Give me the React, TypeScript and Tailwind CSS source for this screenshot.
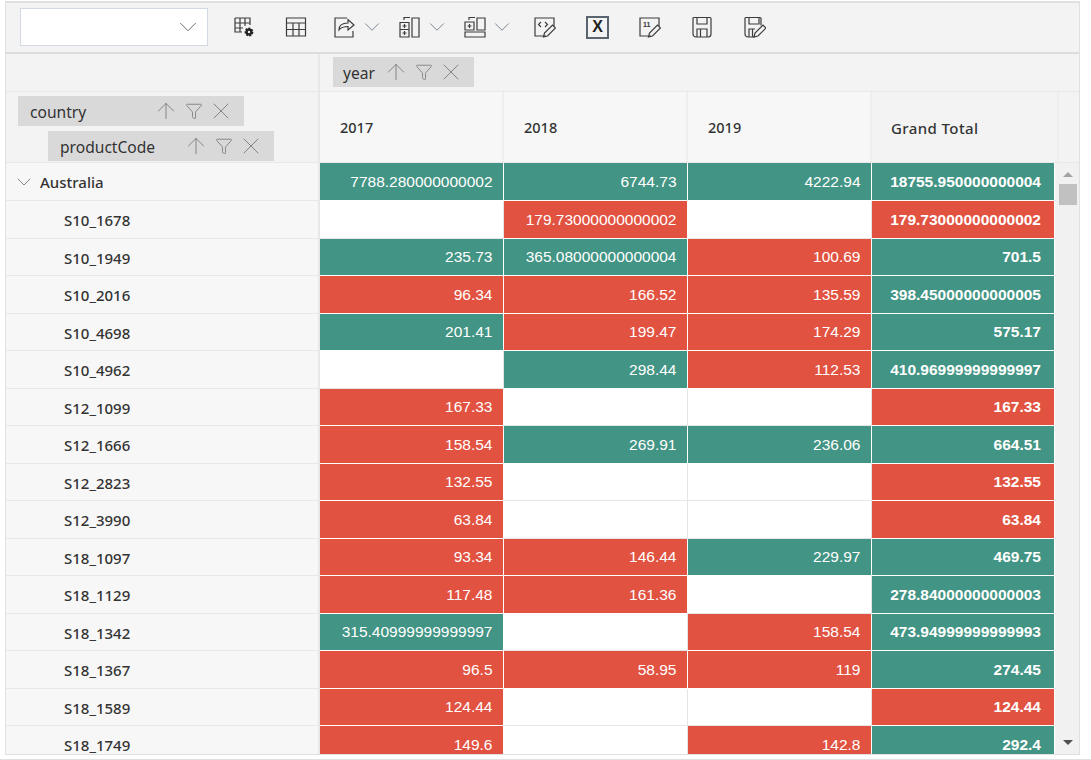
import React from "react";
import { ArrowUp, ChevronDown, Filter, X } from "lucide-react";

type Cell = { v: string; c: "t" | "r" | "" };

const t = (v: string): Cell => ({ v, c: "t" });
const r = (v: string): Cell => ({ v, c: "r" });
const e: Cell = { v: "", c: "" };

const rows: { label: string; cells: Cell[] }[] = [
  { label: "Australia", cells: [t("7788.280000000002"), t("6744.73"), t("4222.94"), t("18755.950000000004")] },
  { label: "S10_1678", cells: [e, r("179.73000000000002"), e, r("179.73000000000002")] },
  { label: "S10_1949", cells: [t("235.73"), t("365.08000000000004"), r("100.69"), t("701.5")] },
  { label: "S10_2016", cells: [r("96.34"), r("166.52"), r("135.59"), t("398.45000000000005")] },
  { label: "S10_4698", cells: [t("201.41"), r("199.47"), r("174.29"), t("575.17")] },
  { label: "S10_4962", cells: [e, t("298.44"), r("112.53"), t("410.96999999999997")] },
  { label: "S12_1099", cells: [r("167.33"), e, e, r("167.33")] },
  { label: "S12_1666", cells: [r("158.54"), t("269.91"), t("236.06"), t("664.51")] },
  { label: "S12_2823", cells: [r("132.55"), e, e, r("132.55")] },
  { label: "S12_3990", cells: [r("63.84"), e, e, r("63.84")] },
  { label: "S18_1097", cells: [r("93.34"), r("146.44"), t("229.97"), t("469.75")] },
  { label: "S18_1129", cells: [r("117.48"), r("161.36"), e, t("278.84000000000003")] },
  { label: "S18_1342", cells: [t("315.40999999999997"), e, r("158.54"), t("473.94999999999993")] },
  { label: "S18_1367", cells: [r("96.5"), r("58.95"), r("119"), t("274.45")] },
  { label: "S18_1589", cells: [r("124.44"), e, e, r("124.44")] },
  { label: "S18_1749", cells: [r("149.6"), e, r("142.8"), t("292.4")] },
];

const cellBg = { t: "bg-[#429484]", r: "bg-[#e25241]", "": "bg-white" };

function Ico({ children, className = "" }: { children: React.ReactNode; className?: string }) {
  return (
    <svg viewBox="0 0 24 24" fill="none" stroke="#3c3c3c" strokeWidth="1.2" className={"h-6 w-6 shrink-0 " + className}>
      {children}
    </svg>
  );
}

function Chev({ className = "" }: { className?: string }) {
  return <ChevronDown className={"h-[26px] w-[26px] shrink-0 text-[#6b7684] " + className} strokeWidth={0.8} />;
}

function Pill({ label, className = "" }: { label: string; className?: string }) {
  return (
    <div className={"flex h-[30px] items-center bg-[#d9d9d9] pr-[10px] text-[15.6px] text-[#333] " + className}>
      <span className="flex-1 pt-[4px]">{label}</span>
      <span className="flex w-[28px] justify-center">
        <ArrowUp className="h-[26px] w-[26px] text-[#777]" strokeWidth={0.8} />
      </span>
      <span className="flex w-[28px] justify-center">
        <Filter className="h-[18px] w-[18px] text-[#777]" strokeWidth={1.1} />
      </span>
      <span className="flex w-[26px] justify-center">
        <X className="h-[28px] w-[28px] shrink-0 text-[#777]" strokeWidth={0.75} />
      </span>
    </div>
  );
}

export default function App() {
  return (
    <div className="h-[760px] w-[1091px] overflow-hidden bg-white pl-[5px] pt-px font-['Noto_Sans',sans-serif]">
      <div className="flex h-[754px] w-[1075px] flex-col overflow-hidden border-x border-b border-t-2 border-[#e0e0e0]">
        {/* Toolbar */}
        <div className="flex h-[51px] shrink-0 items-center border-b-2 border-[#dcdcdc] bg-[#f3f3f3] pb-px pl-[14px]">
          <div className="flex h-[38px] w-[188px] items-center justify-end border border-[#d3d9e4] bg-white pr-[4px]">
            <ChevronDown className="h-[30px] w-[30px] text-[#555]" strokeWidth={0.7} />
          </div>
          <Ico className="ml-[24px]">
            <path d="M3 3h15v7M3 3v14h7M3 8h15M3 13h8M8 3v14M13 3v8" />
            <circle cx="17" cy="17" r="3.4" fill="#222" stroke="#222" strokeWidth="2" strokeDasharray="2 1" />
            <circle cx="17" cy="17" r="1.2" fill="#f3f3f3" stroke="none" />
          </Ico>
          <Ico className="ml-[28px]">
            <path d="M2.5 3h19v18h-19zM2.5 8h19M2.5 14.5h19M9 8v13M15 8v13" />
          </Ico>
          <Ico className="ml-[24px]">
            <path d="M15 3H3v19h18v-6" />
            <path d="M7 15c0-5 3-7 9-7V4.5l6 5.5-6 5v-3.5c-4 0-7 1-9 3.500z" />
          </Ico>
          <Chev className="ml-[3px]" />
          <Ico className="ml-[12px]">
            <path d="M7 5V2.500h6M3 7.500h9V22H3zM3 14.500h9M15 3h7v19h-7z" />
            <path d="M5.500 11h4M7.500 9v4M5.500 18h4M7.500 16v4" />
          </Ico>
          <Chev className="ml-[3px]" />
          <Ico className="ml-[13px]">
            <path d="M6 5V2.500h6M2 7h9v8H2zM14 3h8v12h-8zM2 17h20v5H2z" />
            <path d="M4.500 11h4M6.500 9v4" />
          </Ico>
          <Chev className="ml-[2px] text-[#4b7fb0]" />
          <Ico className="ml-[17px]">
            <path d="M14 21H3V3h19v8" />
            <path d="M9 7l-2.500 2.500L9 12M13 7l2.500 2.500L13 12" />
            <path d="M13 22l1-4 8-8 3 3-8 8z" transform="translate(-1.500 0)" />
          </Ico>
          <div className="ml-[30px] flex h-[23px] w-[23px] shrink-0 items-center justify-center border-2 border-[#5a646e] font-['Liberation_Sans',sans-serif] text-[16px] font-bold leading-none text-[#222]">
            X
          </div>
          <Ico className="ml-[28px]">
            <path d="M14 21H3V3h19v8" />
            <path d="M13 22l1-4 8-8 3 3-8 8z" transform="translate(-1.500 0)" />
            <text x="6" y="12" fontSize="7" fontWeight="700" fill="#333" stroke="none" fontFamily="Liberation Sans">11</text>
          </Ico>
          <Ico className="ml-[29px]">
            <path d="M4 2.500h16a1.500 1.500 0 0 1 1 1V19a3 3 0 0 1-3 3H6a3 3 0 0 1-3-3V3.500a1 1 0 0 1 1-1z" />
            <path d="M7 2.500V9h10V2.500M7 22v-8h10v8M10.500 14v8" />
          </Ico>
          <Ico className="ml-[28px]">
            <path d="M13 22H6a3 3 0 0 1-3-3V3.500a1 1 0 0 1 1-1h14a1 1 0 0 1 1 1v7" />
            <path d="M7 2.500V9h10V2.500M7 22v-8h6M10.500 14v8" />
            <path d="M13 22l1-4 8-8 3 3-8 8z" transform="translate(-1 0)" />
          </Ico>
        </div>

        {/* Column axis */}
        <div className="flex h-[38px] shrink-0 border-b border-[#e8e8e8] bg-[#f3f3f3]">
          <div className="w-[314px] shrink-0 border-r-2 border-[#e8e8e8]" />
          <div className="pl-[13px] pt-[3px]">
            <Pill label="year" className="w-[141px] pl-[10px]" />
          </div>
        </div>

        {/* Column headers */}
        <div className="flex h-[71px] shrink-0 border-b border-[#e8e8e8] bg-[#f7f7f7]">
          <div className="flex w-[314px] shrink-0 flex-col gap-[5px] border-r-2 border-[#e8e8e8] bg-[#f3f3f3] pl-[12px] pt-[4px]">
            <Pill label="country" className="w-[226px] pl-[12px]" />
            <Pill label="productCode" className="ml-[30px] w-[226px] pl-[12px]" />
          </div>
          {["2017", "2018", "2019"].map((y) => (
            <div key={y} className="flex w-[184px] shrink-0 items-center border-r-2 border-[#eeeeee] pl-[20px] pt-[2px] text-[14.5px] font-medium text-[#333]">
              {y}
            </div>
          ))}
          <div className="flex w-[187px] shrink-0 items-center border-r-2 border-[#eeeeee] bg-[#f3f3f3] pl-[19px] pt-[2px] text-[15px] font-medium tracking-[0.4px] text-[#333]">
            Grand Total
          </div>
          <div className="flex-1 bg-[#f3f3f3]" />
        </div>

        {/* Body */}
        <div className="flex min-h-0 flex-1">
          <div className="min-w-0 flex-1 overflow-hidden">
            {rows.map((row, i) => (
              <div key={row.label} className={"flex " + (i === 0 ? "h-[38px]" : "h-[37.5px]")}>
                <div
                  className={
                    "flex w-[314px] shrink-0 items-center border-b border-r-2 border-[#e8e8e8] bg-[#f7f7f7] text-[15px] font-medium text-[#333] " +
                    (i === 0 ? "pl-[6px]" : "pl-[58px]")
                  }
                >
                  {i === 0 && <ChevronDown className="mr-[4px] h-6 w-6 text-[#666]" strokeWidth={0.8} />}
                  <span className="pt-[2px]">{row.label}</span>
                </div>
                {row.cells.map((cell, j) => (
                  <div
                    key={j}
                    className={
                      "flex shrink-0 items-center justify-end border-b border-r font-['Liberation_Sans',sans-serif] text-[15.5px] text-white " +
                      (cell.c ? "border-white " : "border-[#e6e6e6] ") +
                      cellBg[cell.c] +
                      (j === 3 ? " w-[183px] pr-[13px] font-bold" : " w-[184px] pr-[10.500px]")
                    }
                  >
                    {cell.v}
                  </div>
                ))}
              </div>
            ))}
          </div>
          {/* Scrollbar */}
          <div className="flex w-[24px] shrink-0 flex-col items-center bg-[#f1f1f1] pl-[2px]">
            <div className="mt-[9px] h-0 w-0 border-x-[5px] border-b-[5px] border-x-transparent border-b-[#a3a3a3]" />
            <div className="mt-[7px] h-[21px] w-[18px] bg-[#c1c1c1]" />
            <div className="mt-auto mb-[9px] h-0 w-0 border-x-[5px] border-t-[5px] border-x-transparent border-t-[#505050]" />
          </div>
        </div>
      </div>
      <div className="-ml-[5px] mt-[4px] h-px w-[1091px] bg-[#e0e0e0]" />
    </div>
  );
}
